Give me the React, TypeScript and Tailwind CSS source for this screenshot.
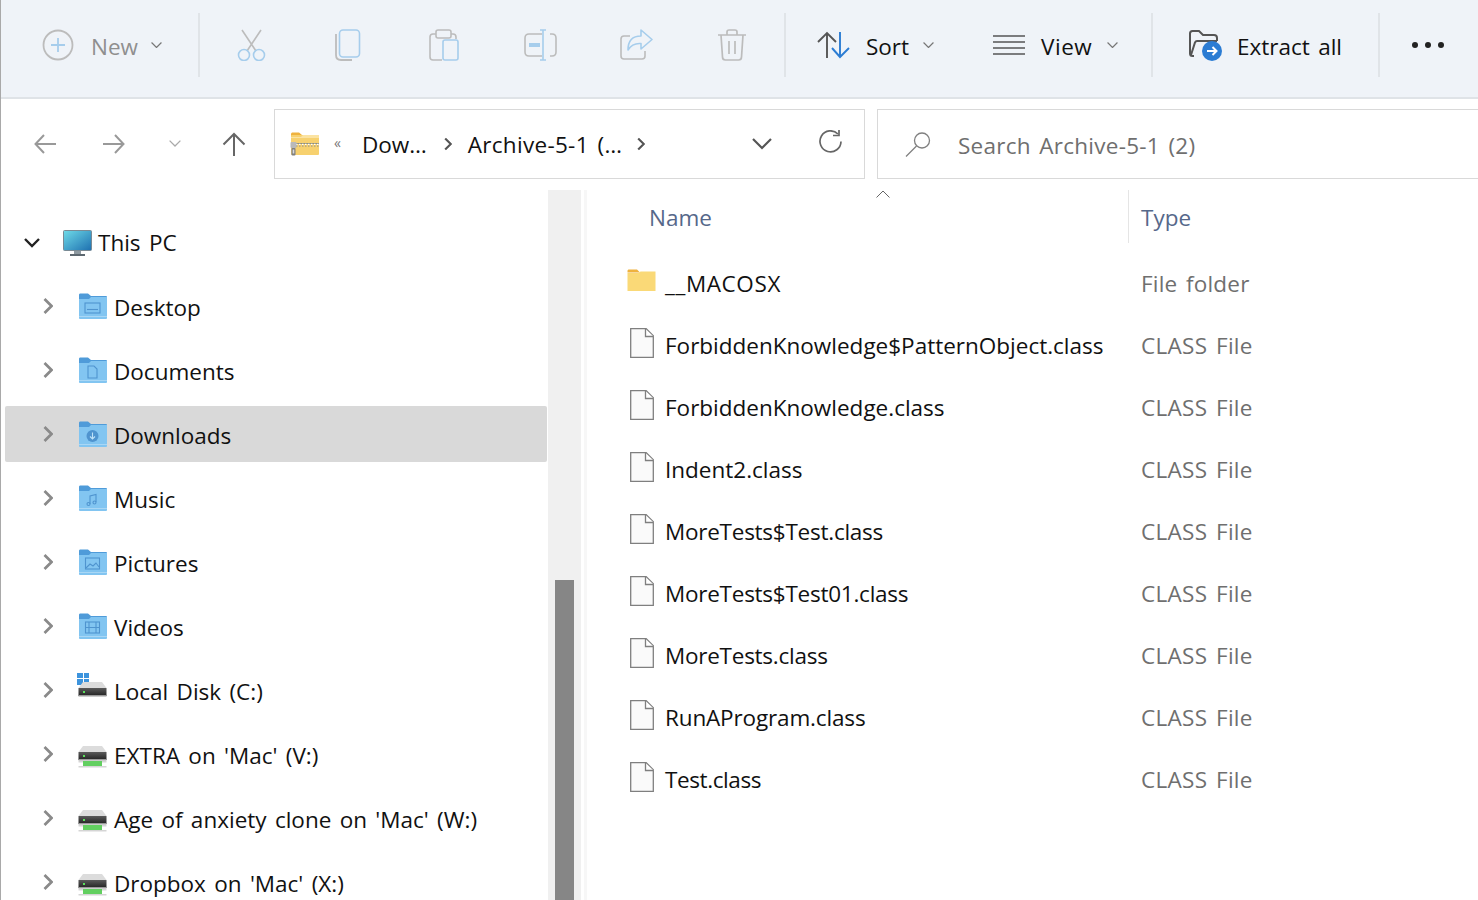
import React from "react";
import type { ReactNode } from "react";

const gray = "#bcbcbc";
const blue = "#a6cdec";

const ChevronDown = ({ w = 11, color = "#777" }: { w?: number; color?: string }) => (
  <svg width={w} height={w * 0.6} viewBox="0 0 10 6" fill="none" stroke={color} strokeWidth="1.100">
    <path d="M.5.5 5 5 9.500 .5" />
  </svg>
);

const ChevronRight = ({ color = "#8a8a8a" }: { color?: string }) => (
  <svg width="10" height="16" viewBox="0 0 10 16" fill="none" stroke={color} strokeWidth="2.700">
    <path d="M1.500 1 8.500 8l-7 7" />
  </svg>
);

const CutIcon = () => (
  <svg width="30" height="32" viewBox="0 0 30 32" fill="none" strokeWidth="1.600">
    <path d="M5 1 19 22M24 1 10 22" stroke={gray} />
    <circle cx="7" cy="26" r="5.500" stroke={blue} />
    <circle cx="22" cy="26" r="5.500" stroke={blue} />
  </svg>
);

const CopyIcon = () => (
  <svg width="26" height="32" viewBox="0 0 26 32" fill="none" strokeWidth="1.600">
    <path d="M1 5v21c0 3 2 5 5 5h11" stroke={gray} strokeWidth="1.800" />
    <rect x="4.500" y="1" width="20" height="27" rx="3.500" stroke={blue} />
  </svg>
);

const PasteIcon = () => (
  <svg width="30" height="32" viewBox="0 0 30 32" fill="none" strokeWidth="1.600">
    <path d="M7 5H4C2 5 1 6 1 8v20c0 2 1 3 3 3h9M22 5h2c2 0 3 1 3 3v2" stroke={gray} />
    <rect x="7" y="1" width="15" height="8" rx="2" stroke={gray} />
    <rect x="14" y="11" width="15" height="20" rx="2" stroke={blue} />
  </svg>
);

const RenameIcon = () => (
  <svg width="33" height="32" viewBox="0 0 33 32" fill="none" strokeWidth="1.600">
    <path d="M18 5H5C2.500 5 1 6.500 1 9v14c0 2.500 1.500 4 4 4h13M26 5h2c2.500 0 4 1.500 4 4v14c0 2.500-1.500 4-4 4h-2" stroke={gray} />
    <path d="M16 1h6M19 1v30M16 31h6" stroke={blue} />
    <rect x="5" y="14" width="11" height="4" fill={blue} />
  </svg>
);

const ShareIcon = () => (
  <svg width="33" height="32" viewBox="0 0 33 32" fill="none" strokeWidth="1.600">
    <path d="M10 7H4C2 7 1 8 1 10v17c0 2 1 3 3 3h18c2 0 3-1 3-3v-5" stroke={gray} />
    <path d="M21 1v6c-9 0-13 5-13 14 3-5 7-7 13-6.500V20l11-9.500z" stroke={blue} strokeLinejoin="round" />
  </svg>
);

const TrashIcon = () => (
  <svg width="30" height="32" viewBox="0 0 30 32" fill="none" stroke={gray} strokeWidth="1.700">
    <path d="M1 6h28M10 6V3c0-1 1-2 2-2h6c1 0 2 1 2 2v3M4 6l1.500 22c0 2 1 3 3 3h13c2 0 3-1 3-3L26 6M12 12v13M18 12v13" />
  </svg>
);

const SortIcon = () => (
  <svg width="33" height="28" viewBox="0 0 33 28" fill="none" strokeWidth="1.900">
    <path d="M10 27V2M1 11l9-9 9 9" stroke="#555" />
    <path d="M23 1v25M15 17l8 9 9-9" stroke="#2b7cd3" />
  </svg>
);

const ViewIcon = () => (
  <svg width="32" height="20" viewBox="0 0 32 20" fill="none" stroke="#555" strokeWidth="1.700">
    <path d="M0 1h32M0 7h32M0 13h32M0 19h32" />
  </svg>
);

const ExtractIcon = () => (
  <svg width="33" height="31" viewBox="0 0 33 31" fill="none">
    <path d="M5 26H3.500C2 26 1 25 1 23.500V3.500C1 2 2 1 3.500 1H10l4 4h11c1.500 0 3 1 3 3v3" stroke="#555" strokeWidth="2" />
    <path d="M2 25 6 12.500c.500-1 1-1.500 2-1.500h20" stroke="#555" strokeWidth="2" />
    <circle cx="23" cy="21" r="10" fill="#2b7cd3" />
    <path d="M18 21h9M23.500 17l4 4-4 4" stroke="#fff" strokeWidth="2" />
  </svg>
);

const PlusIcon = () => (
  <svg width="32" height="32" viewBox="0 0 32 32" fill="none" strokeWidth="1.800">
    <circle cx="16" cy="16" r="14.500" stroke={gray} />
    <path d="M16 9v14M9 16h14" stroke={blue} />
  </svg>
);

const ZipFolder = () => (
  <svg width="30" height="24" viewBox="0 0 30 24">
    <path d="M1 2.500C1 1 1.500 .5 3 .5h6L12 3 10 5H1z" fill="#efb23e" />
    <rect x="1" y="3" width="28" height="20" rx="1" fill="#f7d16f" />
    <path d="M1 5h10l2-2h16v3H1z" fill="#fbe3a2" />
    <rect x="6" y="11" width="23" height="1" fill="#8d8d7c" />
    <path d="M6 12.500h23" stroke="#fff" strokeWidth="1.500" strokeDasharray="1.500 1.500" />
    <path d="M6 14h23" stroke="#8d8d7c" strokeWidth="1" strokeDasharray="1.500 1.500" />
    <rect x="0.500" y="10" width="6" height="6" rx="1" fill="#b9b9b9" />
    <rect x="1.500" y="16" width="4" height="7.500" rx="1" fill="#7f7f7f" />
    <rect x="2.700" y="17.500" width="1.600" height="4" fill="#d9d9d9" />
  </svg>
);

const BlueFolder = ({ children }: { children?: ReactNode }) => (
  <svg width="29" height="26" viewBox="0 0 29 26">
    <path d="M1 2c0-1 .5-1.500 1.500-1.500H10L13 3h15c.500 0 1 .500 1 1v3H1z" fill="#4f9bd9" />
    <path d="M1 6h10l2-2h16v21c0 .500-.500 1-1 1H2c-.500 0-1-.500-1-1z" fill="#82c5f1" />
    <rect x="1" y="23" width="28" height="1" fill="#a9d7f5" />
    <g fill="none" stroke="#4f94cf" strokeWidth="1.100">{children}</g>
  </svg>
);

const Drive = ({ green = true, win = false }: { green?: boolean; win?: boolean }) => (
  <span className="relative block w-[29px] h-[22px] mt-[5px]">
    {win && (
      <span className="absolute left-[-1px] top-[-9px] grid grid-cols-2 gap-[1px] w-[12px] h-[12px]">
        <i className="bg-[#3d94dd]" />
        <i className="bg-[#3d94dd]" />
        <i className="bg-[#3d94dd]" />
        <i className="bg-[#3d94dd]" />
      </span>
    )}
    <svg width="29" height="22" viewBox="0 0 29 22" className="absolute left-0 top-0">
      <defs>
        <linearGradient id="driveBar" x1="0" y1="0" x2="0" y2="1">
          <stop offset="0" stopColor="#5a5a5a" />
          <stop offset="1" stopColor="#222" />
        </linearGradient>
      </defs>
      <path d="M5 0h19l4.500 6H.500z" fill="#dcdcdc" />
      <rect x="0.500" y="6" width="28" height="8" fill="url(#driveBar)" />
      <rect x="0.500" y="13" width="28" height="1.500" fill="#9a9a9a" />
      <rect x="5" y="9" width="2" height="2" fill="#5be05b" />
      {green ? (
        <>
          <rect x="0.500" y="15" width="28" height="1.500" fill="#d5d5d5" />
          <rect x="5" y="15" width="19" height="6" fill="#62cf60" />
          <rect x="0.500" y="20" width="28" height="1.500" fill="#d5d5d5" />
        </>
      ) : null}
    </svg>
  </span>
);

const Monitor = () => (
  <svg width="29" height="27" viewBox="0 0 29 27">
    <defs>
      <linearGradient id="screen" x1="0" y1="0" x2="1" y2="1">
        <stop offset="0" stopColor="#6fdbe8" />
        <stop offset="1" stopColor="#1d6fb0" />
      </linearGradient>
    </defs>
    <rect x="0.500" y="0.500" width="28" height="20" rx="1" fill="url(#screen)" stroke="#7a8a94" />
    <rect x="11" y="21" width="7" height="3" fill="#8f9aa1" />
    <rect x="7" y="24" width="15" height="2" fill="#5d6870" />
  </svg>
);

const FileIcon = () => (
  <svg width="24" height="30" viewBox="0 0 24 30">
    <path d="M.700.700h15.500L23.300 7.800v21.500H.700z" fill="#fafafa" stroke="#7f7f7f" strokeWidth="1.300" />
    <path d="M15.500 1v7.500h8" fill="#fff" stroke="#7f7f7f" strokeWidth="1.300" />
  </svg>
);

const Separator = () => <div className="w-[2px] h-[64px] bg-[#e0e4e8] shrink-0" />;

const sideItems: { label: string; icon: ReactNode; selected?: boolean }[] = [
  { label: "Desktop", icon: <BlueFolder><rect x="7" y="10" width="15" height="10" /><path d="M9 16.500h11" /></BlueFolder> },
  { label: "Documents", icon: <BlueFolder><path d="M10 9h6l3 3v9h-9z" /></BlueFolder> },
  {
    label: "Downloads",
    selected: true,
    icon: <BlueFolder><circle cx="14.500" cy="15" r="6" fill="#4f94cf" stroke="none" /><path d="M14.500 11.500v6M12 15.500l2.500 2.500 2.500-2.500" stroke="#bfe2f8" /></BlueFolder>,
  },
  { label: "Music", icon: <BlueFolder><path d="M12 19V11l6-1.500V17" /><circle cx="10.500" cy="19" r="1.500" /><circle cx="16.500" cy="17.500" r="1.500" /></BlueFolder> },
  { label: "Pictures", icon: <BlueFolder><rect x="7.500" y="9" width="14" height="11" /><path d="M8 19l4-4 3 2 3-3 3 4" /></BlueFolder> },
  { label: "Videos", icon: <BlueFolder><rect x="7.500" y="9" width="14" height="11" /><path d="M11 9v11M18 9v11M7.500 14.500h14" /></BlueFolder> },
  { label: "Local Disk (C:)", icon: <Drive green={false} win /> },
  { label: "EXTRA on 'Mac' (V:)", icon: <Drive /> },
  { label: "Age of anxiety clone on 'Mac' (W:)", icon: <Drive /> },
  { label: "Dropbox on 'Mac' (X:)", icon: <Drive /> },
];

const files = [
  { name: "ForbiddenKnowledge$PatternObject.class", cls: "" },
  { name: "ForbiddenKnowledge.class", cls: "" },
  { name: "Indent2.class", cls: "" },
  { name: "MoreTests$Test.class", cls: "tracking-[-0.250px]" },
  { name: "MoreTests$Test01.class", cls: "tracking-[-0.250px]" },
  { name: "MoreTests.class", cls: "tracking-[-0.250px]" },
  { name: "RunAProgram.class", cls: "tracking-[-0.150px]" },
  { name: "Test.class", cls: "tracking-[-0.400px]" },
];

const App = () => {
  return (
    <div className="w-[1478px] h-[900px] overflow-hidden bg-white border-l border-[#a9a9a9] font-['Open_Sans',sans-serif] text-[22.500px] text-[#111] [word-spacing:2.500px] flex flex-col">
      {/* command bar */}
      <div className="h-[99px] shrink-0 bg-[#eff3f8] border-b-2 border-[#dfe3e7] flex items-center pb-[7px]">
        <div className="w-[197px] shrink-0 flex items-center pl-[41px] text-[#8f8f8f]">
          <PlusIcon />
          <span className="ml-[17px] mt-[4px]">New</span>
          <span className="ml-[13px]"><ChevronDown /></span>
        </div>
        <Separator />
        <div className="flex ml-[4px] shrink-0">
          {[<CutIcon />, <CopyIcon />, <PasteIcon />, <RenameIcon />, <ShareIcon />, <TrashIcon />].map((icon, i) => (
            <div key={i} className="w-[96px] flex justify-center">{icon}</div>
          ))}
        </div>
        <div className="w-[4px] shrink-0" />
        <Separator />
        <div className="flex items-center shrink-0 w-[365px] pl-[31px]">
          <SortIcon />
          <span className="ml-[16px] mt-[4px]">Sort</span>
          <span className="ml-[14px]"><ChevronDown /></span>
          <span className="ml-[59px]"><ViewIcon /></span>
          <span className="ml-[16px] mt-[4px] tracking-[0.500px]">View</span>
          <span className="ml-[15px]"><ChevronDown /></span>
        </div>
        <Separator />
        <div className="flex items-center shrink-0 w-[225px] pl-[36px]">
          <ExtractIcon />
          <span className="ml-[15px] mt-[4px]">Extract all</span>
        </div>
        <Separator />
        <div className="flex gap-[7px] ml-[32px]">
          <i className="w-[6px] h-[6px] rounded-full bg-[#222]" />
          <i className="w-[6px] h-[6px] rounded-full bg-[#222]" />
          <i className="w-[6px] h-[6px] rounded-full bg-[#222]" />
        </div>
      </div>

      {/* nav + address */}
      <div className="h-[91px] shrink-0 flex items-start pt-[10px]">
        <div className="w-[273px] h-[70px] shrink-0 flex items-center pl-[33px]">
          <svg width="22" height="20" viewBox="0 0 22 20" fill="none" stroke="#999" strokeWidth="2"><path d="M22 10H2M10 1 1.500 10 10 19" /></svg>
          <svg className="ml-[47px]" width="22" height="20" viewBox="0 0 22 20" fill="none" stroke="#999" strokeWidth="2"><path d="M0 10h20M12 1l8.500 9-8.500 9" /></svg>
          <span className="ml-[44px]"><ChevronDown w={12} color="#aaa" /></span>
          <svg className="ml-[41px]" width="24" height="24" viewBox="0 0 24 24" fill="none" stroke="#666" strokeWidth="2"><path d="M12 24V2M1.500 12.500 12 2l10.500 10.500" /></svg>
        </div>
        <div className="w-[591px] h-[70px] shrink-0 border border-[#d9d9d9] flex items-center pl-[15px]">
          <ZipFolder />
          <span className="ml-[14px] text-[14px] text-[#777] mb-[4px]">«</span>
          <span className="ml-[21px] mt-[2px]">Dow…</span>
          <span className="ml-[16px] scale-[0.8]"><ChevronRight color="#555" /></span>
          <span className="ml-[15px] mt-[2px] tracking-[0.300px]">Archive-5-1 (…</span>
          <span className="ml-[14px] scale-[0.8]"><ChevronRight color="#555" /></span>
          <span className="ml-auto"><ChevronDown w={20} color="#555" /></span>
          <svg className="ml-[46px] mr-[22px] mb-[6px]" width="24" height="23" viewBox="0 0 24 23" fill="none" stroke="#666" strokeWidth="1.700">
            <path d="M20 4a10.500 10.500 0 1 0 3 7.500" />
            <path d="M21 0v5.500h-6" />
          </svg>
        </div>
        <div className="w-[12px] shrink-0" />
        <div className="flex-1 h-[70px] border border-[#d9d9d9] border-r-0 flex items-center pl-[27px] text-[#6f6f6f]">
          <svg width="26" height="25" viewBox="0 0 26 25" fill="none" stroke="#808080" strokeWidth="1.300">
            <circle cx="17" cy="8.500" r="7.500" />
            <path d="M11.500 14 1 24.500" />
          </svg>
          <span className="ml-[27px] mt-[4px] tracking-[0.250px]">Search Archive-5-1 (2)</span>
        </div>
      </div>

      <div className="flex flex-1 min-h-0">
        {/* nav pane */}
        <div className="w-[547px] shrink-0 overflow-hidden pt-[25px] pl-[4px] pr-[1px]">
          <div className="h-[56px] flex items-center pl-[19px]">
            <svg width="16" height="10" viewBox="0 0 16 10" fill="none" stroke="#222" strokeWidth="2.400"><path d="M1 1l7 7 7-7" /></svg>
            <span className="ml-[23px]"><Monitor /></span>
            <span className="ml-[6px]">This PC</span>
          </div>
          <div className="flex flex-col gap-[8px] mt-[7px]">
            {sideItems.map((item) => (
              <div key={item.label} className={`h-[56px] shrink-0 flex items-center rounded-[2px] pl-[38px] ${item.selected ? "bg-[#d9d9d9]" : ""}`}>
                <ChevronRight />
                <span className="ml-[25px] w-[29px] flex justify-center">{item.icon}</span>
                <span className="ml-[7px] mt-[4px] whitespace-nowrap">{item.label}</span>
              </div>
            ))}
          </div>
        </div>

        {/* scrollbar */}
        <div className="w-[33px] shrink-0 bg-[#f0f0f0] flex flex-col items-center pt-[390px]">
          <div className="w-[19px] flex-1 bg-[#868686]" />
        </div>
        <div className="w-[3px] ml-[3px] shrink-0 bg-[#f7f7f7]" />

        {/* file list */}
        <div className="relative flex-1 min-w-0">
          <svg className="absolute left-[289px] top-0" width="14" height="8" viewBox="0 0 14 8" fill="none" stroke="#666" strokeWidth="1">
            <path d="M.500 7.500 7 1l6.500 6.500" />
          </svg>
          <div className="h-[63px] flex items-start text-[#56688a]">
            <div className="w-[541px] shrink-0 pl-[62px] pt-[11px]">Name</div>
            <div className="h-[53px] border-l border-[#e5e5e5] pl-[12px] pt-[11px]">Type</div>
          </div>
          <div className="h-[62px] flex items-center">
            <div className="w-[544px] shrink-0 flex items-center pl-[40px]">
              <svg className="mb-[8px]" width="29" height="23" viewBox="0 0 29 23">
                <path d="M.500 2c0-1 .5-1.500 1.500-1.500h8l3 3H.500z" fill="#efb23e" />
                <path d="M.500 4h11l2-1.500h15V22H.500z" fill="#fad977" />
              </svg>
              <span className="ml-[9px] tracking-[0.600px]">__MACOSX</span>
            </div>
            <span className="ml-[10px] text-[#6f6f6f] tracking-[0.200px]">File folder</span>
          </div>
          {files.map((f) => (
            <div key={f.name} className="h-[62px] flex items-center">
              <div className="w-[544px] shrink-0 flex items-center pl-[43px]">
                <span className="mb-[6px]"><FileIcon /></span>
                <span className={`ml-[11px] whitespace-nowrap ${f.cls}`}>{f.name}</span>
              </div>
              <span className="ml-[10px] text-[#6f6f6f] tracking-[0.300px]">CLASS File</span>
            </div>
          ))}
        </div>
      </div>
    </div>
  );
};

export default App;
